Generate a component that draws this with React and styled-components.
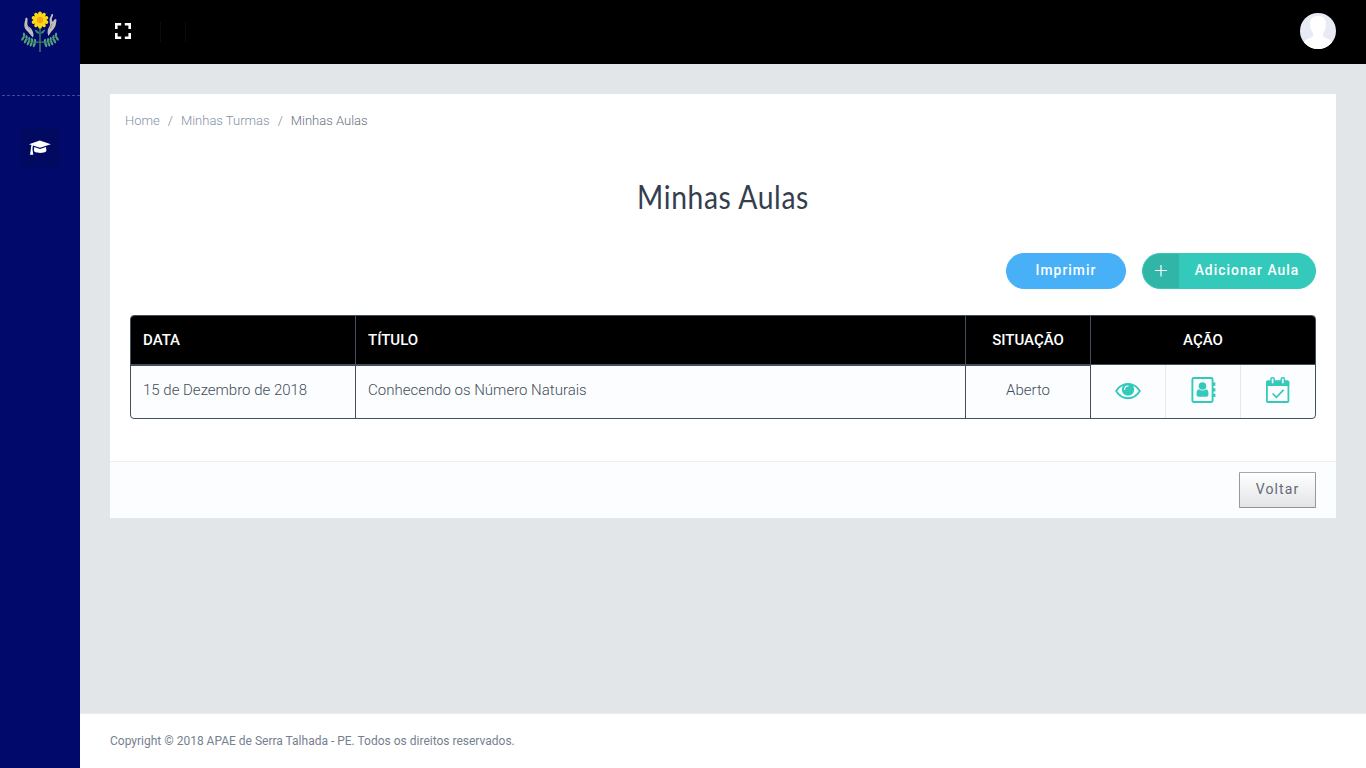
import React from "react";
import styled, { createGlobalStyle } from "styled-components";

const Global = createGlobalStyle`
  *, *::before, *::after { box-sizing: border-box; }
  body { margin: 0; font-family: Roboto, "Liberation Sans", sans-serif; color: #464f5b; background: #e2e6e9; }
  h1, p { margin: 0; }
  svg { display: block; }
`;

const Shell = styled.div`display: flex; height: 768px; overflow: hidden;`;
const Sidebar = styled.nav`
  flex: 0 0 80px; display: flex; flex-direction: column; align-items: center; background: #01096b;
`;
const Brand = styled.div`
  width: 80px; height: 96px; padding: 11px 20px 0;
`;
const Divider = styled.div`
  width: 80px; height: 1px; margin-top: -1px;
  background: repeating-linear-gradient(90deg, transparent 0 2px, #40498f 2px 5px);
`;
const NavItem = styled.a`
  width: 40px; height: 40px; margin-top: 32px; border-radius: 2px; background: #010960;
  display: flex; align-items: center; justify-content: center; color: #fff;
`;
const Main = styled.div`flex: 1; display: flex; flex-direction: column;`;
const Topbar = styled.header`
  height: 64px; padding: 0 30px 2px 35px; display: flex; align-items: center; background: #000;
`;
const Separator = styled.span`
  width: 1px; height: 20px; margin: 2px 0 0 ${p => p.$gap}px; background: #0c0c0c;
`;
const Avatar = styled.div`
  width: 36px; height: 36px; margin-left: auto; border-radius: 50%; overflow: hidden; background: #e8ebf3;
`;
const Content = styled.main`flex: 1; padding: 30px; background: #e2e6e9;`;
const Card = styled.section`height: 424px; display: flex; flex-direction: column; background: #fff;`;
const Breadcrumb = styled.div`
  display: flex; padding: 17px 15px 0; height: 82px; gap: 8px;
  font-size: 13px; line-height: 20px; font-weight: 300; color: #7d8798;
`;
const Crumb = styled.span`color: ${p => (p.$current ? "#69717e" : "#8390a5")};`;
const Title = styled.h1`
  height: 77px; text-align: center; font-family: Lato, sans-serif; font-size: 32.5px; line-height: 42px;
  font-weight: 400; color: #343e4e; transform: scaleX(0.87); letter-spacing: 0.7px;
`;
const Actions = styled.div`
  display: flex; justify-content: flex-end; gap: 16px; padding: 0 20px; height: 62px;
`;
const PillButton = styled.button`
  width: ${p => p.$width}px; height: 36px; padding: 0; border: 1px solid ${p => p.$color};
  border-radius: 18px; overflow: hidden; background: ${p => p.$color}; color: #fff;
  display: flex; align-items: center; font: 500 13.8px Roboto, sans-serif; letter-spacing: 1.04px;
`;
const PillIcon = styled.span`
  width: 36px; height: 34px; background: #30b5a7; display: flex; align-items: center; justify-content: center;
`;
const PillLabel = styled.span`flex: 1; text-align: center; line-height: 32px; padding-bottom: 2px;`;
const Table = styled.div`
  margin: 0 20px; height: 104px; border: 1px solid #434f5d; border-radius: 4px; overflow: hidden;
  display: grid; grid-template-columns: 225px 610px 125px 1fr; background: #fcfdff;
`;
const Column = styled.div`
  display: flex; flex-direction: column; text-align: ${p => p.$align || "left"};
  border-right: ${p => (p.$last ? 0 : 1)}px solid #434f5d;
`;
const HeadCell = styled.div`
  height: ${p => (p.$thin ? 49 : 50)}px; padding: 0 12px; background: #000; color: #fff;
  border-bottom: ${p => (p.$thin ? 1 : 2)}px solid #434f5d;
  font-size: 15px; line-height: 48px; font-weight: 500;
`;
const Cell = styled.div`
  flex: 1; padding: 0 12px; font-size: 15px; line-height: 48px; font-weight: 300; color: #434d5a;
`;
const IconCells = styled.div`flex: 1; display: grid; grid-template-columns: 75px 75px 74px;`;
const IconCell = styled.a`
  display: flex; justify-content: center; padding-top: 12px; color: #34cabb;
  border-right: ${p => (p.$last ? 0 : 1)}px solid #e5e9ec;
`;
const CardFooter = styled.footer`
  height: 57px; margin-top: auto; padding: 10px 20px; border-top: 1px solid #edf0f2;
  background: #fcfdff; display: flex; justify-content: flex-end;
`;
const BackButton = styled.button`
  width: 77px; height: 36px; padding: 0 0 2px; border: 1px solid; border-color: #a9a9aa #999 #929292 #999;
  border-radius: 1px; background: linear-gradient(#fff, #e3e4e7); color: #616a78;
  font: 400 14px Roboto, sans-serif; letter-spacing: 1.1px;
`;
const PageFooter = styled.footer`
  height: 55px; padding: 0 30px; border-top: 1px solid #eaedef; background: #fff;
  font-size: 12px; line-height: 54px; color: #76808f;
`;

const leaves = [[4, 25.5, 30], [6.5, 28, 28], [9.2, 29.8, 25], [12, 31, 22], [15, 31.6, 20]];

function Logo() {
  return (
    <svg width="40" height="44" viewBox="0 0 40 44">
      <path d="M5.6 7C6.6 6.2 7.6 6.9 7.6 8l-.3 5.2 1.2 2.6c1.8.2 3.2 2.2 4 4.2 1.1 2.3 1.4 4.5.4 6.5L7.6 20.5C4.500 18 3.900 15 4.500 12Z" fill="#c1bdb9" />
      <path d="M7.2 14.500 10.500 19" fill="none" stroke="#77759b" strokeWidth=".7" />
      <path d="M31.600 3.300c1-.6 1.900.2 1.400 1.300L31.700 8l.8 3 2-2.600c1.200-1 2.400.1 1.900 1.400l-.6 4c-.6 3-3 5-5 7.500L28.600 25c-1.400-2.500-1.400-5.700 0-8L30 14l-.5-6Z" fill="#c1bdb9" />
      <path d="m32 12.500-1.800 5" fill="none" stroke="#77759b" strokeWidth=".7" />
      <path d="M20 17v24" stroke="#3e7f62" strokeWidth="1.4" />
      <path d="M19.700 23c-1-2.800-3-4-5-4.400.5 2.600 2.400 4.500 5 4.400Zm.6 0c1-2.800 3-4 5-4.400-.5 2.600-2.400 4.500-5 4.400Z" fill="#3f8865" />
      {[1, -1].map(s => (
        <g key={s} transform={s === 1 ? undefined : "translate(40 0) scale(-1 1)"}>
          <path d="M3 23.500C6 29.500 12 32 19.700 31" fill="none" stroke="#4b9170" strokeWidth="1" />
          {leaves.map(([x, y, a]) => (
            <g key={x} fill="#52a078">
              <ellipse cx={x + 0.5} cy={y - 1.9} rx="1.1" ry="2" transform={`rotate(-12 ${x} ${y})`} />
              <ellipse cx={x} cy={y + 2.3} rx="1.2" ry="2.6" transform={`rotate(${a} ${x} ${y})`} />
            </g>
          ))}
        </g>
      ))}
      {Array.from({ length: 10 }, (_, i) => (
        <ellipse key={i} cx="20" cy="3.6" rx="2" ry="3.2" fill="#fbd915" transform={`rotate(${i * 36} 20 9)`} />
      ))}
      <circle cx="20" cy="9" r="3.2" fill="#f3a51b" />
    </svg>
  );
}

function CapIcon() {
  return (
    <svg width="22" height="16" viewBox="0 0 22 16" fill="currentColor">
      <path d="M10.800.5 21.800 4.200 11 7.800 4 5.600Q3.500 7 3.500 9.500L4.300 14.700H1L1.800 9.500Q1.900 6.500 2.500 5.100L0 4.200Z" />
      <path d="m5.200 7.100 5.800 1.900 6-1.900.4 3.500c.1 1.400-2.900 2.400-6.300 2.400s-6.200-.9-6.200-2.400Z" />
    </svg>
  );
}

function ExpandIcon() {
  return (
    <svg width="16" height="16" viewBox="0 0 16 16" fill="none" stroke="#fff" strokeWidth="2.6">
      <path d="M1.300 6V1.300H6.200M9.800 1.300h4.900V6M14.700 10v4.700H9.800M6.200 14.700H1.300V10" />
    </svg>
  );
}

function Person() {
  return (
    <svg width="36" height="36" viewBox="0 0 36 36" fill="#fff">
      <path d="M18 3c4.800 0 8 2.800 7.800 7l-.2 2.500c.7.6.4 2.500-.5 3.400-.4 2-1.200 3.200-2 4 0 2.400-.1 3.700 1.600 4.700l5 1.800c1.600.7 2.400 2.700 2.800 4.600L27 36H9l-5.500-5c.4-1.900 1.500-3.900 3-4.600l5-1.800c1.700-1 1.600-2.300 1.600-4.700-.8-.8-1.700-2-2.100-4-.9-.9-1.200-2.800-.5-3.400L10.200 10C10 5.800 13.200 3 18 3Z" />
    </svg>
  );
}

function EyeIcon() {
  return (
    <svg width="26" height="28" viewBox="0 0 26 28">
      <path d="M1.100 14C4 9.200 8.100 6.900 13 6.900S22 9.200 24.900 14c-3 4.700-7 7.200-11.900 7.200S4 18.700 1.100 14Z" fill="none" stroke="currentColor" strokeWidth="1.9" strokeLinejoin="round" />
      <circle cx="13" cy="12.500" r="6.200" fill="currentColor" />
      <path d="M9.600 12.500c0-2.200 1.300-3.500 3.500-3.500" fill="none" stroke="#fff" strokeWidth="1.1" strokeLinecap="round" />
    </svg>
  );
}

function BookIcon() {
  return (
    <svg width="25" height="28" viewBox="0 0 25 28" fill="currentColor">
      <rect x="1.4" y="1" width="20.2" height="24" rx="1.4" fill="none" stroke="currentColor" strokeWidth="1.9" />
      <circle cx="11.500" cy="9" r="3.800" />
      <path d="M8 12.200c1 .8 2.100 1.200 3.500 1.200s2.600-.4 3.500-1.200c1.900.3 2.500 2.200 2.500 4.700 0 1.800-.7 2.800-2 2.800h-8c-1.300 0-2-1-2-2.800 0-2.500.6-4.400 2.500-4.700Z" />
      <path d="M22 5.500h2.400v3.200H22zm0 5.800h2.400v3.200H22zm0 5.500h2.400V20H22z" />
    </svg>
  );
}

function CalendarIcon() {
  return (
    <svg width="24" height="28" viewBox="0 0 24 28">
      <rect x=".9" y="4.3" width="21.5" height="20.7" rx="1" fill="none" stroke="currentColor" strokeWidth="1.8" />
      <path d="M0 5Q0 3.500 1.800 3.500h19.700q1.800 0 1.800 1.500v4H0Z" fill="currentColor" />
      <g fill="#fcfdff" stroke="currentColor" strokeWidth="1.5">
        <rect x="5" y=".8" width="3.2" height="6.2" rx="1.3" />
        <rect x="15.2" y=".8" width="3.2" height="6.2" rx="1.3" />
      </g>
      <path d="m6.600 16.500 3.800 3.800 7.200-7.500" fill="none" stroke="currentColor" strokeWidth="1.7" />
    </svg>
  );
}

export default function App() {
  return (
    <Shell>
      <Global />
      <Sidebar>
        <Brand><Logo /></Brand>
        <Divider />
        <NavItem><CapIcon /></NavItem>
      </Sidebar>
      <Main>
        <Topbar>
          <ExpandIcon />
          <Separator $gap={29} />
          <Separator $gap={24} />
          <Avatar><Person /></Avatar>
        </Topbar>
        <Content>
          <Card>
            <Breadcrumb>
              <Crumb>Home</Crumb><span>/</span><Crumb>Minhas Turmas</Crumb><span>/</span><Crumb $current>Minhas Aulas</Crumb>
            </Breadcrumb>
            <Title>Minhas Aulas</Title>
            <Actions>
              <PillButton $width={120} $color="#48b0f7"><PillLabel>Imprimir</PillLabel></PillButton>
              <PillButton $width={174} $color="#34cabb">
                <PillIcon>
                  <svg width="12" height="13" viewBox="0 0 12 13" stroke="#fff" strokeWidth="1.2"><path d="M0 5.500h12M6 0v11.500" /></svg>
                </PillIcon>
                <PillLabel>Adicionar Aula</PillLabel>
              </PillButton>
            </Actions>
            <Table>
              <Column><HeadCell>DATA</HeadCell><Cell>15 de Dezembro de 2018</Cell></Column>
              <Column><HeadCell>TÍTULO</HeadCell><Cell>Conhecendo os Número Naturais</Cell></Column>
              <Column $align="center"><HeadCell>SITUAÇÃO</HeadCell><Cell>Aberto</Cell></Column>
              <Column $align="center" $last>
                <HeadCell $thin>AÇÃO</HeadCell>
                <IconCells>
                  <IconCell><EyeIcon /></IconCell>
                  <IconCell><BookIcon /></IconCell>
                  <IconCell $last><CalendarIcon /></IconCell>
                </IconCells>
              </Column>
            </Table>
            <CardFooter><BackButton>Voltar</BackButton></CardFooter>
          </Card>
        </Content>
        <PageFooter>Copyright © 2018 APAE de Serra Talhada - PE. Todos os direitos reservados.</PageFooter>
      </Main>
    </Shell>
  );
}
